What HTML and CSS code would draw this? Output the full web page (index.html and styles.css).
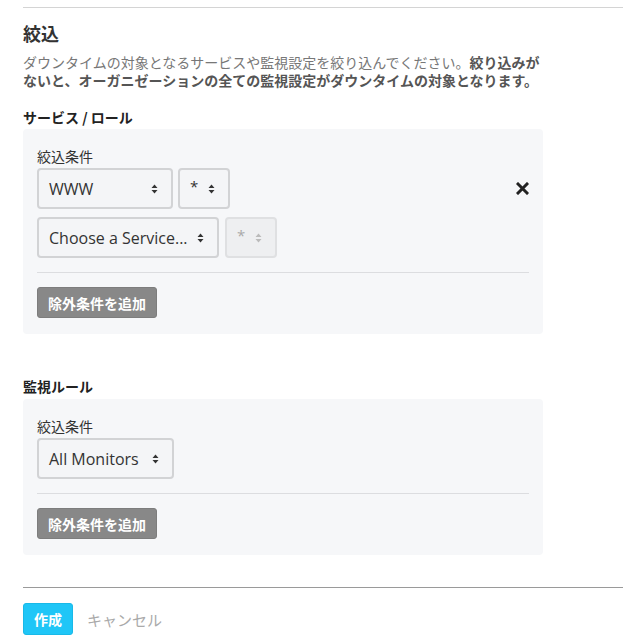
FILE: index.html
```html
<!DOCTYPE html>
<html lang="ja">
<head>
  <meta charset="UTF-8">
  <meta name="viewport" content="width=device-width, initial-scale=1.0">
  <title>ダウンタイム 絞込</title>
  <link rel="stylesheet" href="styles.css">
</head>
<body>
  <div class="page">
    <hr class="rule">

    <h2>絞込</h2>
    <p class="desc">ダウンタイムの対象となるサービスや監視設定を絞り込んでください。<strong>絞り込みがないと、オーガニゼーションの全ての監視設定がダウンタイムの対象となります。</strong></p>

    <h3>サービス / ロール</h3>
    <div class="panel">
      <label class="field-label">絞込条件</label>
      <div class="condition">
        <div class="rows">
          <div class="row">
            <div class="select select-www">
              <span>WWW</span>
              <svg class="caret" width="7" height="10" viewBox="0 0 7 10"><path d="M3.5 0.5 L6.5 4 H0.5 Z M3.5 9.5 L6.5 6 H0.5 Z" fill="#333"/></svg>
            </div>
            <div class="select select-star">
              <span>*</span>
              <svg class="caret" width="7" height="10" viewBox="0 0 7 10"><path d="M3.5 0.5 L6.5 4 H0.5 Z M3.5 9.5 L6.5 6 H0.5 Z" fill="#333"/></svg>
            </div>
          </div>
          <div class="row">
            <div class="select select-service">
              <span>Choose a Service...</span>
              <svg class="caret" width="7" height="10" viewBox="0 0 7 10"><path d="M3.5 0.5 L6.5 4 H0.5 Z M3.5 9.5 L6.5 6 H0.5 Z" fill="#333"/></svg>
            </div>
            <div class="select select-star disabled">
              <span>*</span>
              <svg class="caret" width="7" height="10" viewBox="0 0 7 10"><path d="M3.5 0.5 L6.5 4 H0.5 Z M3.5 9.5 L6.5 6 H0.5 Z" fill="#bbb"/></svg>
            </div>
          </div>
        </div>
        <button class="remove" type="button" aria-label="削除">
          <svg width="13" height="13" viewBox="0 0 13 13"><path d="M2 2 L11 11 M11 2 L2 11" stroke="#222" stroke-width="3" stroke-linecap="square"/></svg>
        </button>
      </div>
      <div class="divider"></div>
      <button class="btn-gray" type="button">除外条件を追加</button>
    </div>

    <h3 class="section-gap">監視ルール</h3>
    <div class="panel">
      <label class="field-label">絞込条件</label>
      <div class="row">
        <div class="select select-monitor">
          <span>All Monitors</span>
          <svg class="caret" width="7" height="10" viewBox="0 0 7 10"><path d="M3.5 0.5 L6.5 4 H0.5 Z M3.5 9.5 L6.5 6 H0.5 Z" fill="#333"/></svg>
        </div>
      </div>
      <div class="divider"></div>
      <button class="btn-gray" type="button">除外条件を追加</button>
    </div>

    <hr class="rule rule-dark">
    <div class="actions">
      <button class="btn-primary" type="submit">作成</button>
      <a class="cancel" href="#">キャンセル</a>
    </div>
  </div>
</body>
</html>
```

FILE: styles.css
```css
* {
  box-sizing: border-box;
  margin: 0;
  padding: 0;
}

body {
  font-family: "Noto Sans CJK JP", "Noto Sans", sans-serif;
  background: #fff;
  color: #333;
}

.page {
  padding: 7px 0 0 23px;
}

.rule {
  border: none;
  border-top: 1px solid #d4d4d4;
  margin-bottom: 12px;
}

.rule-dark {
  border-top-color: #9a9a9a;
  margin-top: 32px;
  margin-bottom: 15px;
}

h2 {
  font-size: 18px;
  font-weight: 700;
  line-height: 27px;
  color: #333;
  margin-bottom: 6px;
}

.desc {
  width: 520px;
  font-size: 14px;
  line-height: 18px;
  color: #777;
  margin-bottom: 18px;
}

.desc strong {
  color: #555;
}

h3 {
  font-size: 14px;
  font-weight: 700;
  line-height: 20px;
  color: #222;
  margin-bottom: 2px;
}

.section-gap {
  margin-top: 42px;
  margin-bottom: 3px;
}

.panel {
  width: 520px;
  background: #f6f7f9;
  border-radius: 4px;
  padding: 17px 14px 16px;
}

.field-label {
  display: block;
  font-size: 14px;
  line-height: 20px;
  color: #333;
  margin-bottom: 2px;
}

.condition {
  display: flex;
  justify-content: space-between;
  align-items: flex-start;
}

.rows {
  display: flex;
  flex-direction: column;
  gap: 8px;
}

.row {
  display: flex;
  gap: 5px;
}

.select {
  display: flex;
  align-items: center;
  justify-content: space-between;
  height: 41px;
  padding: 0 13px 0 10px;
  border: 2px solid #d2d3d5;
  border-radius: 4px;
  background: #f4f5f7;
  font-family: "Open Sans", "Noto Sans", sans-serif;
  font-size: 16px;
  color: #333;
}

.select .caret {
  flex-shrink: 0;
}

.select-www { width: 136px; }
.select-star { width: 52px; }
.select-service { width: 182px; }
.select-monitor { width: 137px; }

.select-star span {
  position: relative;
  top: -3px;
  font-size: 15px;
}

.select.disabled {
  background: #eeeff1;
  border-color: #dfe0e2;
  color: #aaa;
  margin-left: 1px;
}

.remove {
  background: none;
  border: none;
  cursor: pointer;
  display: flex;
  margin-top: 14px;
}

.divider {
  height: 1px;
  background: #dcdde0;
  margin: 14px 0;
}

.btn-gray {
  display: block;
  height: 31px;
  padding: 0 10px;
  background: #888;
  border: 1px solid #7d7d7d;
  border-radius: 3px;
  color: #fff;
  font-family: inherit;
  font-size: 14px;
  font-weight: 700;
  cursor: pointer;
}

.actions {
  display: flex;
  align-items: center;
  gap: 14px;
}

.btn-primary {
  height: 32px;
  width: 50px;
  background: #1fc6f7;
  border: 1px solid #19b9e8;
  border-radius: 3px;
  color: #fff;
  font-family: inherit;
  font-size: 14px;
  font-weight: 700;
  cursor: pointer;
}

.cancel {
  color: #aaa;
  font-size: 15px;
  text-decoration: none;
}
```
